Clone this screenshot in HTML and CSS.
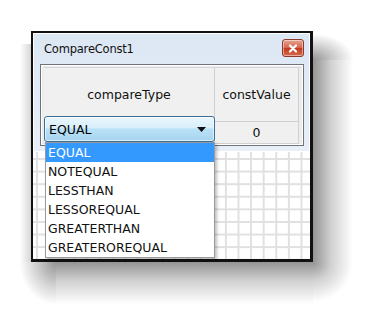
FILE: index.html
```html
<!DOCTYPE html>
<html>
<head lang="en">
    <meta charset="UTF-8">
    <title>CompareConst1</title>
    <link rel="stylesheet" href="styles.css">
</head>
<body>
<div id="stage">
    <div id="frame">
        <div id="window">
            <div class="titlebar">
                <span class="title">CompareConst1</span>
                <span class="close">
                    <svg width="10" height="9" viewBox="0 0 10 9">
                        <path d="M2 1.5 L8 7.5 M8 1.5 L2 7.5" stroke="#fff" stroke-width="2.2" stroke-linecap="round"/>
                    </svg>
                </span>
            </div>
            <div class="props">
                <div class="grid">
                    <div class="cell head">compareType</div>
                    <div class="cell head">constValue</div>
                    <div class="cell"></div>
                    <div class="cell value">0</div>
                </div>
            </div>
        </div>
        <div id="canvas"></div>

        <div class="combo">
            <span>EQUAL</span>
            <svg width="9" height="5" viewBox="0 0 9 5"><path d="M0 0 H9 L4.5 5 Z" fill="#111"/></svg>
        </div>
        <ul class="dropdown">
            <li class="selected">EQUAL</li>
            <li>NOTEQUAL</li>
            <li>LESSTHAN</li>
            <li>LESSOREQUAL</li>
            <li>GREATERTHAN</li>
            <li>GREATEROREQUAL</li>
        </ul>
    </div>
</div>
</body>
</html>
```

FILE: styles.css
```css
*{
    padding: 0;
    margin: 0;
    box-sizing: border-box;
}
ul{
    list-style: none;
}
body{
    background: #fff;
    font-family: "DejaVu Sans", "Liberation Sans", sans-serif;
    font-size: 12px;
    color: #111;
}
/* the soft drop shadow is painted as gradient strips round the frame */
#stage{
    height: 327px;
    padding: 31px 0 0 31px;
    background-color: #fff;
    background-repeat: no-repeat;
    background-image:
        linear-gradient(90deg, rgba(0,0,0,.42), rgba(0,0,0,.18) 45%, rgba(0,0,0,0)),
        radial-gradient(ellipse at 0 100%, rgba(0,0,0,.42), rgba(0,0,0,.15) 45%, rgba(0,0,0,0) 72%),
        linear-gradient(rgba(0,0,0,.42), rgba(0,0,0,.18) 45%, rgba(0,0,0,0)),
        radial-gradient(circle at 0 0, rgba(0,0,0,.42), rgba(0,0,0,.18) 18px, rgba(0,0,0,0) 40px),
        radial-gradient(ellipse at 100% 0, rgba(0,0,0,.42), rgba(0,0,0,.15) 45%, rgba(0,0,0,0) 72%),
        linear-gradient(270deg, rgba(0,0,0,.16), rgba(0,0,0,0));
    background-position:
        313px 60px,
        313px 34px,
        56px 262px,
        313px 262px,
        20px 262px,
        20px 44px;
    background-size:
        40px 202px,
        40px 26px,
        257px 42px,
        40px 42px,
        36px 42px,
        11px 218px;
}
#frame{
    position: relative;
    width: 282px;
    height: 231px;
    border: 2px solid #111;
    border-right-width: 3px;
    border-bottom-width: 3px;
    display: flex;
    flex-direction: column;
}
#window{
    height: 119px;
    background: linear-gradient(#dce7f4, #e8eff8);
    border: 1px solid #fff;
    display: flex;
    flex-direction: column;
}
.titlebar{
    height: 30px;
    display: flex;
    align-items: center;
    justify-content: space-between;
    padding: 0 5px 0 10px;
}
.title{
    font-size: 11.5px;
    color: #111;
    letter-spacing: -0.2px;
}
.close{
    width: 22px;
    height: 18px;
    margin-top: -2px;
    border: 1px solid #8b3a2b;
    border-radius: 3px;
    box-shadow: inset 0 0 0 1px rgba(255,255,255,.45);
    background: linear-gradient(#e9a493, #d4624a 50%, #c2391f 51%, #d86a4c);
    display: flex;
    align-items: center;
    justify-content: center;
}
.props{
    margin: 0 5px 0 6px;
    height: 82px;
    border: 1px solid #6f737a;
    box-shadow: inset 0 0 0 1px #fff;
    background: #ececec;
    padding: 2px 2px 2px 3px;
}
.grid{
    display: grid;
    grid-template-columns: 171px 84px;
    grid-template-rows: 54px 22px;
    border-top: 1px solid #d6d6d6;
}
.cell{
    background: #f0f0f0;
    border-right: 1px solid #d0d0d0;
    border-bottom: 1px solid #d0d0d0;
    display: flex;
    align-items: center;
    justify-content: center;
    font-size: 12.5px;
    color: #111;
}
#canvas{
    flex: 1;
    background-color: #fff;
    background-image:
        linear-gradient(90deg, #e0e0e0 1.5px, transparent 1.5px),
        linear-gradient(#e0e0e0 1.5px, transparent 1.5px);
    background-size: 12.6px 12.6px;
    background-position: 3px 6px;
}
.combo{
    position: absolute;
    left: 11px;
    top: 83px;
    width: 171px;
    height: 26px;
    border: 1px solid #3d6f94;
    border-radius: 3px;
    box-shadow: inset 0 0 0 1px rgba(255,255,255,.6);
    background: linear-gradient(#eaf6fd, #d8effb 45%, #b9e1f7 50%, #a6d5ef);
    display: flex;
    align-items: center;
    justify-content: space-between;
    padding: 0 8px 0 4px;
    font-size: 12.5px;
    color: #000;
}
.dropdown{
    position: absolute;
    left: 12px;
    top: 109px;
    width: 170px;
    height: 116px;
    background: #fff;
    border: 1px solid #9a9a9a;
    box-shadow: 2px 2px 3px rgba(0,0,0,.25);
    font-size: 12.5px;
}
.dropdown li{
    height: 19px;
    line-height: 19px;
    padding-left: 2px;
    color: #111;
}
.dropdown .selected{
    background: #3399ff;
    color: #fff;
}
```
